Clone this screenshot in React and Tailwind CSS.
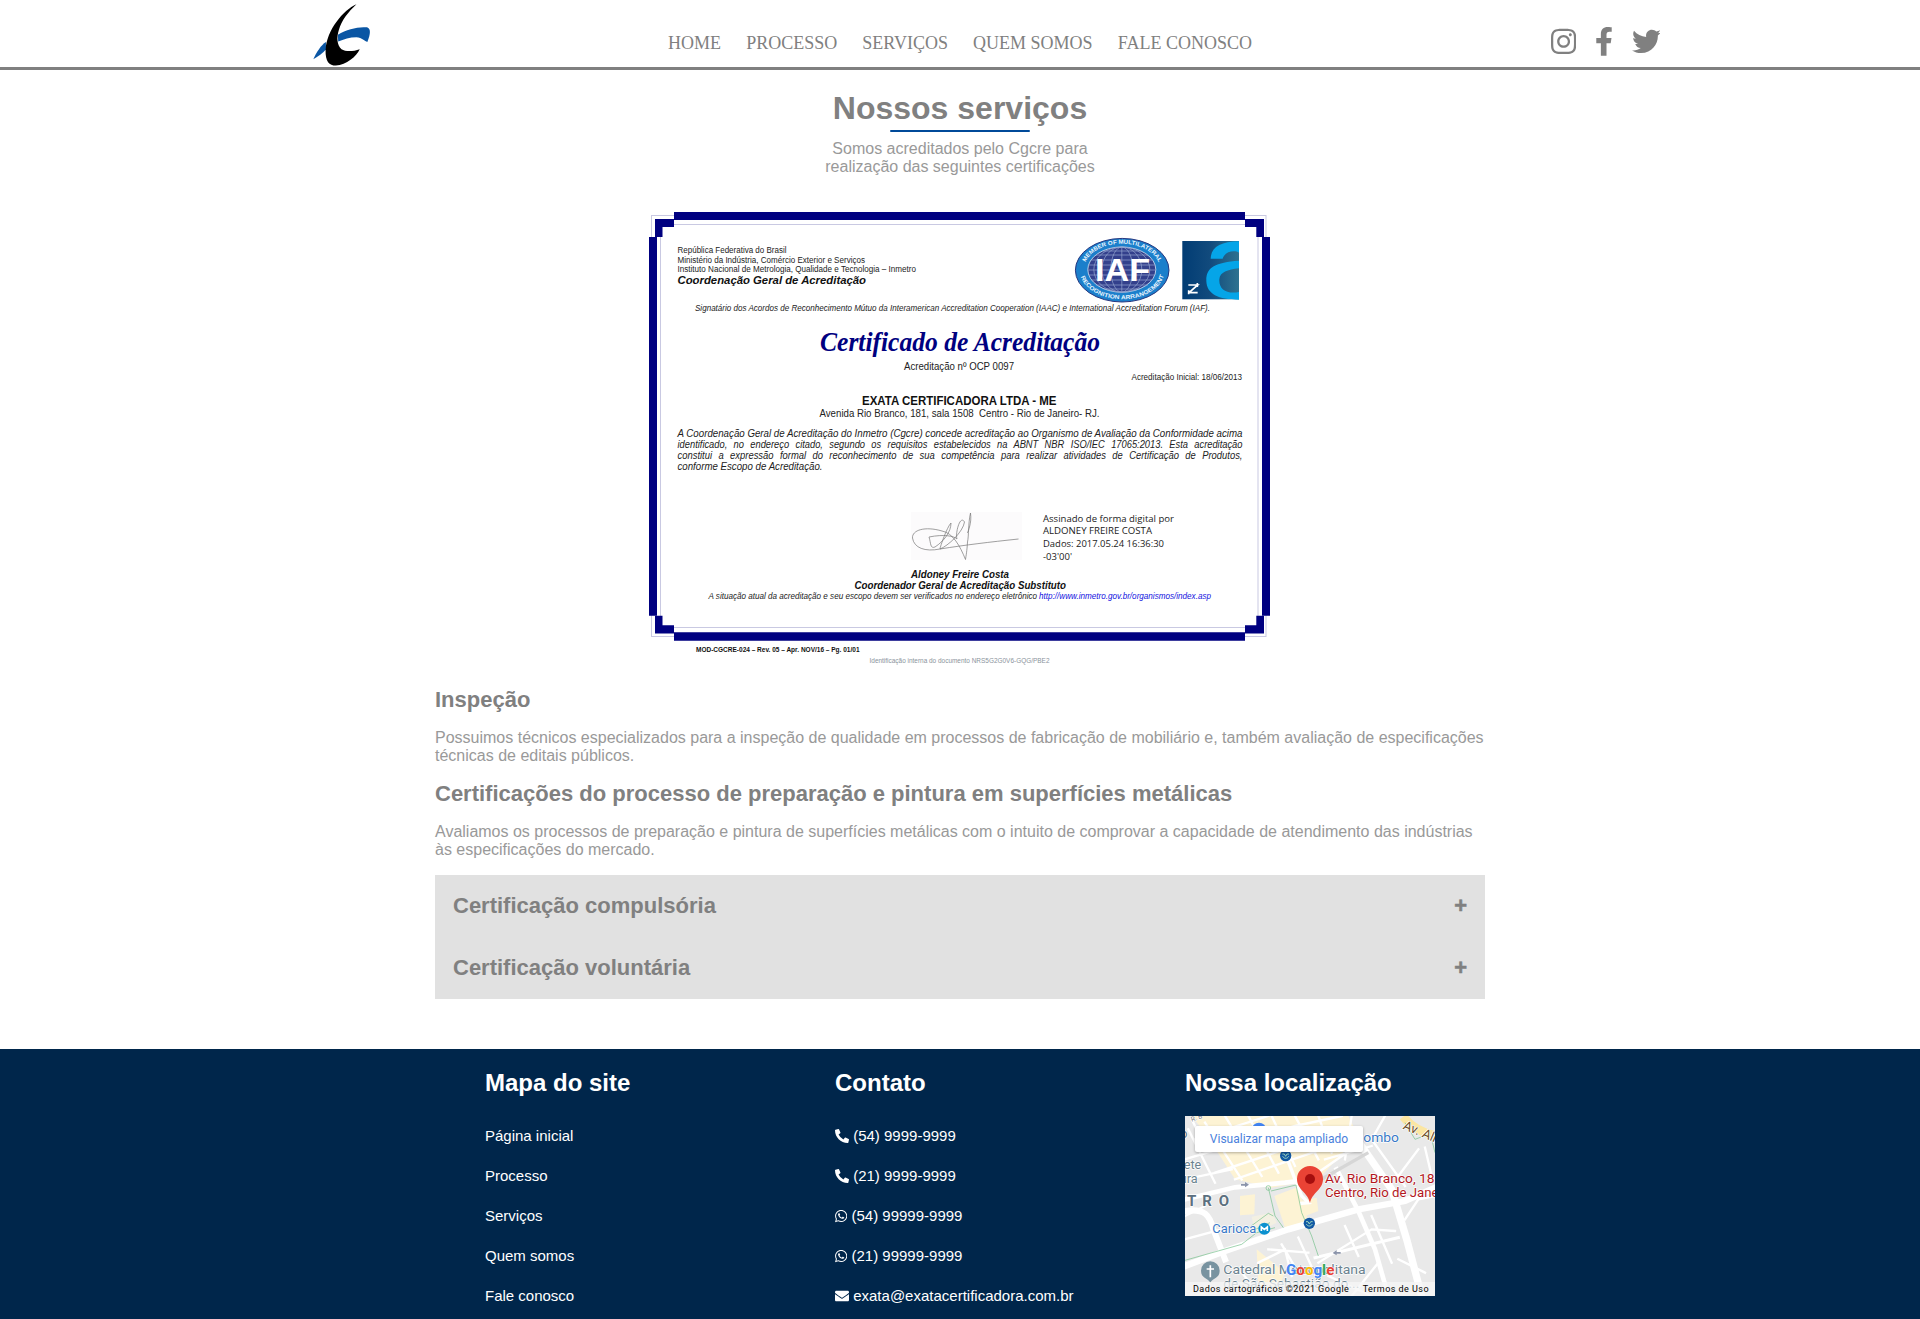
import React from "react";
import { FaInstagram, FaFacebookF, FaTwitter, FaPhoneAlt, FaWhatsapp, FaEnvelope } from "react-icons/fa";

const ARIAL = "'Liberation Sans', Arial, sans-serif";

function Logo() {
  return (
    <svg viewBox="60 0 190 201" className="h-[67px] w-[63px]" aria-hidden="true">
      <path d="M108 126C94 134 79 158 70 178C85 170 98 160 108 149Z" fill="#0a56a4" />
      <path d="M144 104C172 88 205 79 232 82C244 86 243 102 233 126C225 124 217 113 200 112C180 112 162 118 145 125Z" fill="#0a56a4" />
      <path d="M200 12C160 30 110 90 107 150C106 185 118 197 138 197C170 195 200 170 210 148C190 155 168 156 155 148C141 136 140 112 147 90C155 60 176 35 200 12Z" fill="#000" />
    </svg>
  );
}

function T({ x, y, w, s, b, i, fill = "#222", font = ARIAL, ws, children }) {
  return (
    <text
      x={x}
      y={y}
      textLength={w}
      lengthAdjust="spacingAndGlyphs"
      fontSize={s}
      fontWeight={b ? 700 : 400}
      fontStyle={i ? "italic" : "normal"}
      fontFamily={font}
      fill={fill}
      wordSpacing={ws}
    >
      {children}
    </text>
  );
}

function IafSeal() {
  return (
    <g>
      <ellipse cx="1122.2" cy="270.2" rx="46.8" ry="31.8" fill="#1b7fcb" stroke="#27377f" strokeWidth="1" />
      <ellipse cx="1121.8" cy="269.6" rx="34" ry="22.6" fill="#33408c" stroke="#d5e6f5" strokeWidth="0.8" />
      <g fill="none" stroke="#93a5d0" strokeWidth="0.7">
        <ellipse cx="1121.8" cy="269.6" rx="28" ry="22.6" />
        <ellipse cx="1121.8" cy="269.6" rx="20" ry="22.6" />
        <ellipse cx="1121.8" cy="269.6" rx="11" ry="22.6" />
        <path d="M1121.8 247V292M1103 251H1141M1096 255H1148M1091 260H1152M1089 265H1155M1088 270H1156M1089 275H1155M1091 280H1152M1096 285H1148M1104 289H1140" />
      </g>
      <path id="iaf-top" d="M1084.5 268A37.5 24.2 0 0 1 1159.5 268" fill="none" />
      <path id="iaf-bottom" d="M1079.700 270A42.5 29.3 0 0 0 1164.7 270" fill="none" />
      <text fontFamily={ARIAL} fontSize="5.8" fontWeight="700" fill="#eaf6ff">
        <textPath href="#iaf-top" startOffset="6" textLength="86" lengthAdjust="spacingAndGlyphs">MEMBER OF MULTILATERAL</textPath>
      </text>
      <text fontFamily={ARIAL} fontSize="5.8" fontWeight="700" fill="#eaf6ff">
        <textPath href="#iaf-bottom" startOffset="7" textLength="101" lengthAdjust="spacingAndGlyphs">RECOGNITION ARRANGEMENT</textPath>
      </text>
      <T x={1095} y={281} w={55} s={31} b fill="#fff">IAF</T>
    </g>
  );
}

function InmetroMark() {
  return (
    <g>
      <defs>
        <linearGradient id="inm" x1="0" x2="1">
          <stop offset="0" stopColor="#013c74" />
          <stop offset="0.5" stopColor="#124b7d" />
          <stop offset="1" stopColor="#2e7290" />
        </linearGradient>
      </defs>
      <rect x="1182.3" y="241" width="56.7" height="58.3" fill="url(#inm)" />
      <g transform="translate(1060 225) scale(.33333)">
        <path d="M452 101C453 66 482 50 537 49V83C525 75 496 77 488 101ZM537 107C465 112 438 127 439 168C440 207 475 224 537 224V201C500 208 476 193 478 163C480 141 503 134 537 130Z" fill="#05a5e8" />
        <path d="M385 203H413M385 180H413L388 202M386 196V208M412 174V186" fill="none" stroke="#fff" strokeWidth="5" />
      </g>
    </g>
  );
}

function Certificate() {
  return (
    <svg viewBox="640 200 640 470" className="block h-[470px] w-[640px]" role="img" aria-label="Certificado de Acreditação">
      <g fill="none" stroke="#c9c9e2" strokeWidth="1">
        <rect x="651.5" y="215.5" width="614.5" height="421" />
        <rect x="660.5" y="224.5" width="597.5" height="403" />
      </g>
      <g fill="#000080">
        <path d="M674 212H1245V220H674ZM674 632.3H1245V640.7H674ZM649 237H657V615.7H649ZM1262 237H1270V615.7H1262Z" />
        <path d="M655 219H674V227H662.5V237H655ZM1245 219H1264V237H1256.3V227H1245ZM655 615.7H662.5V625.3H674V633.5H655ZM1264 615.7V633.5H1245V625.3H1256.3V615.7Z" />
      </g>
      <T x={677.5} y={253.3} w={109} s={8.3}>República Federativa do Brasil</T>
      <T x={677.5} y={262.7} w={187.5} s={8.3}>Ministério da Indústria, Comércio Exterior e Serviços</T>
      <T x={677.5} y={272} w={238.5} s={8.3}>Instituto Nacional de Metrologia, Qualidade e Tecnologia – Inmetro</T>
      <T x={677.5} y={283.9} w={188.5} s={11.3} b i fill="#111">Coordenação Geral de Acreditação</T>
      <IafSeal />
      <InmetroMark />
      <T x={695} y={310.7} w={515} s={8.6} i>Signatário dos Acordos de Reconhecimento Mútuo da Interamerican Accreditation Cooperation (IAAC) e International Accreditation Forum (IAF).</T>
      <T x={820} y={351} w={280} s={28} b i fill="#000080" font="'Brush Script MT', 'Liberation Serif', serif">Certificado de Acreditação</T>
      <T x={904} y={370} w={110} s={10.3}>Acreditação nº OCP 0097</T>
      <T x={1131.5} y={379.8} w={110.5} s={8.5}>Acreditação Inicial: 18/06/2013</T>
      <T x={862} y={405} w={194.5} s={12.2} b fill="#111">EXATA CERTIFICADORA LTDA - ME</T>
      <T x={819.5} y={416.5} w={280} s={10.3}>Avenida Rio Branco, 181, sala 1508&nbsp; Centro - Rio de Janeiro- RJ.</T>
      <T x={677.5} y={437} w={565} s={10} i>A Coordenação Geral de Acreditação do Inmetro (Cgcre) concede acreditação ao Organismo de Avaliação da Conformidade acima</T>
      <T x={677.5} y={448} w={565} s={10} i ws={4}>identificado, no endereço citado, segundo os requisitos estabelecidos na ABNT NBR ISO/IEC 17065:2013. Esta acreditação</T>
      <T x={677.5} y={459} w={565} s={10} i ws={4}>constitui a expressão formal do reconhecimento de sua competência para realizar atividades de Certificação de Produtos,</T>
      <T x={677.5} y={470} w={145} s={10} i>conforme Escopo de Acreditação.</T>
      <rect x="911" y="512" width="111" height="48" fill="#fcfbfc" />
      <path
        d="M970.5 513C968 524 969 535 967.5 542C967 551 966 556 965.5 559.5C960 546 953 533 942 531C925 526 912 530 912.5 538C914 548 925 552 940 549C965 545 990 542 1018.5 539M929 537C931 543 930 549 935 547C944 541 951 532 951 523C947 527 940 547 940 549C948 546 963 532 964.5 522C960 514 955 534 957 539C954 536 944 534 929 537M970.5 513C972 523 968 531 967.5 533"
        fill="none"
        stroke="#777"
        strokeWidth="0.7"
      />
      <T x={1043} y={521.7} w={131} s={9.8} font="'Open Sans', sans-serif">Assinado de forma digital por</T>
      <T x={1043} y={534.3} w={109} s={9.8} font="'Open Sans', sans-serif">ALDONEY FREIRE COSTA</T>
      <T x={1043} y={547} w={121} s={9.8} font="'Open Sans', sans-serif">Dados: 2017.05.24 16:36:30</T>
      <T x={1043} y={559.8} w={29} s={9.8} font="'Open Sans', sans-serif">-03'00'</T>
      <T x={911} y={578} w={98} s={10} b i fill="#111">Aldoney Freire Costa</T>
      <T x={854.5} y={589} w={211.5} s={10} b i fill="#111">Coordenador Geral de Acreditação Substituto</T>
      <T x={708.5} y={598.8} w={328.5} s={8.4} i>A situação atual da acreditação e seu escopo devem ser verificados no endereço eletrônico</T>
      <T x={1039} y={598.8} w={172} s={8.4} i fill="#1010e0">http://www.inmetro.gov.br/organismos/index.asp</T>
      <T x={696} y={652} w={163.5} s={6.8} b fill="#111">MOD-CGCRE-024 – Rev. 05 – Apr. NOV/16 – Pg. 01/01</T>
      <T x={869.5} y={662.5} w={180} s={7} fill="#8a939c">Identificação interna do documento NRS5G2G0V6-GQG/PBE2</T>
    </svg>
  );
}

function StationBadge({ x, y }) {
  return (
    <g transform={`translate(${x} ${y})`}>
      <circle r="17" fill="#1259a3" />
      <path d="M-10 -5H-4L0 2L4 -5H10M-9 2C-5 10 5 10 9 2" fill="none" stroke="#9bd5c0" strokeWidth="3" />
    </g>
  );
}

function MapDrawing() {
  const roboto = "Roboto, sans-serif";
  return (
    <svg viewBox="0 0 750 540" className="block h-[180px] w-[250px]" aria-hidden="true">
      <rect width="750" height="540" fill="#e9e9e9" />
      <g fill="#fdf3d4">
        <path d="M20 0H490L520 60L400 190L260 215L150 190L60 50Z" />
        <path d="M268 240L340 212L372 325L300 335Z" />
        <path d="M165 240L210 235L208 295L165 298Z" />
        <path d="M345 255L395 245L400 285L360 300Z" />
        <path d="M215 400L300 470L280 520L220 510Z" />
        <path d="M200 302L262 290L275 320L210 352Z" fill="#f3f0e2" />
      </g>
      <path d="M655 2C680 35 710 50 750 58" fill="none" stroke="#fbe6a2" strokeWidth="26" />
      <g fill="none" stroke="#fff" strokeLinecap="square">
        <g strokeWidth="7">
          <path d="M0 130L330 30L470 0M60 20L170 190M120 0L230 180M190 0L280 170M260 0L330 150M330 0L400 130M30 70L250 0M90 170L420 60M150 190L440 90M10 40L90 200M400 0L440 110M500 0L480 130M0 190L140 160M420 130L560 90M370 190L500 100M20 10L60 90" />
          <path d="M290 385L340 470M340 365L420 540M250 400L370 410M220 440L300 400L320 480M400 440L560 340L630 345M480 330L520 420M560 300L620 440M0 370L110 340M0 300L60 270M170 470L230 540M430 480L560 540M580 440L500 540M640 430L720 470M600 0L560 70L660 210M700 100L640 180M720 95L740 180M660 310L700 250L750 240" />
        </g>
        <path d="M0 250L150 214L300 200L340 195" strokeWidth="14" />
        <path d="M300 110L330 190L350 240L370 260L350 262" strokeWidth="10" />
        <path d="M0 285C60 275 75 300 85 340L120 430" strokeWidth="18" />
        <path d="M0 450L120 405L310 340L520 280L660 255L750 215" strokeWidth="19" />
        <path d="M455 160L520 285L570 400L610 540" strokeWidth="14" />
        <path d="M530 90L620 220L665 370L710 540" strokeWidth="22" />
        <path d="M390 425L640 365" strokeWidth="9" />
      </g>
      <path d="M400 195L550 110" stroke="#d6d6d6" strokeWidth="10" />
      <g fill="none" stroke="#72c08a" strokeWidth="2">
        <path d="M0 433L170 385L215 350L270 335M250 215L270 300L295 335M258 225L333 207L350 290L380 360L400 420M185 340L250 292L265 300M200 345L255 320M660 20L690 70L730 55M738 60L750 110" />
        <circle cx="250" cy="216" r="7" />
      </g>
      <g fill="#8b94aa">
        <path d="M168 204H180V198L192 206L180 214V209H168ZM467 408H455V402L443 411L455 418V413H467Z" />
      </g>
      <circle cx="222" cy="42" r="22" fill="#4285f4" />
      <StationBadge x={302} y={119} />
      <StationBadge x={373} y={322} />
      <g fontFamily={roboto} stroke="#fff" strokeWidth="4" paintOrder="stroke" strokeLinejoin="round">
        <text x="20" y="17" fontSize="20" fill="#777" transform="rotate(-18 20 17)">R. B</text>
        <text x="-14" y="66" fontSize="38" fill="#5c7080">o</text>
        <text x="-4" y="158" fontSize="38" fill="#6b8390">ete</text>
        <text x="-16" y="200" fontSize="38" fill="#6b8390">ura</text>
        <g fontSize="45" fontWeight="700" fill="#5c7080">
          <text x="6" y="271">T</text>
          <text x="52" y="271">R</text>
          <text x="101" y="271">O</text>
        </g>
        <g lengthAdjust="spacingAndGlyphs">
          <text x="82" y="350" fontSize="39" fill="#3878c7" textLength="132" lengthAdjust="spacingAndGlyphs">Carioca</text>
          <text x="535" y="77" fontSize="39" fill="#3878c7" textLength="107" lengthAdjust="spacingAndGlyphs">ombo</text>
          <text x="652" y="38" fontSize="39" fill="#6d4c1d" transform="rotate(23 652 38)">Av. Alm</text>
          <text x="115" y="474" fontSize="39" fill="#6b8390" textLength="427" lengthAdjust="spacingAndGlyphs">Catedral Metropolitana</text>
          <text x="115" y="515" fontSize="39" fill="#6b8390" textLength="408" lengthAdjust="spacingAndGlyphs">de São Sebastião do...</text>
          <text x="420" y="201" fontSize="40" fill="#b3171d" textLength="352" lengthAdjust="spacingAndGlyphs">Av. Rio Branco, 181</text>
          <text x="420" y="243" fontSize="40" fill="#b3171d" textLength="386" lengthAdjust="spacingAndGlyphs">Centro, Rio de Janeiro</text>
        </g>
      </g>
      <circle cx="238" cy="338" r="18" fill="#0b91cf" />
      <path d="M229 345V333L238 340L247 333V345" fill="none" stroke="#fff" strokeWidth="5" />
      <path d="M76 500C68 485 48 487 48 464A28 28 0 0 1 104 464C104 487 84 485 76 500Z" fill="#7893a0" />
      <path d="M76 448V484M65 459H87" stroke="#fff" strokeWidth="5" />
      <path d="M375 262C370 230 336 222 336 189A39 39 0 0 1 414 189C414 222 380 230 375 262Z" fill="#ea4335" />
      <circle cx="375" cy="189" r="15" fill="#a50e0e" />
      <text x="303" y="476" fontSize="45" fontWeight="700" fontFamily={roboto} textLength="145" lengthAdjust="spacingAndGlyphs" stroke="#fff" strokeWidth="3" paintOrder="stroke">
        <tspan fill="#4285f4">G</tspan>
        <tspan fill="#ea4335">o</tspan>
        <tspan fill="#fbbc04">o</tspan>
        <tspan fill="#4285f4">g</tspan>
        <tspan fill="#34a853">l</tspan>
        <tspan fill="#ea4335">e</tspan>
      </text>
    </svg>
  );
}

function MapCard() {
  return (
    <div className="relative h-[180px] w-[250px] overflow-hidden font-[Roboto,sans-serif]">
      <MapDrawing />
      <a className="absolute left-[10px] top-[10px] flex h-[26px] w-[168px] items-center justify-center whitespace-nowrap rounded-[2px] bg-white text-[12px] text-[#4a7fdc] shadow-[0_1px_3px_rgba(0,0,0,0.3)]">
        Visualizar mapa ampliado
      </a>
      <div className="absolute bottom-0 right-0 flex h-[14px] w-full items-center justify-between whitespace-nowrap bg-[#f5f5f5]/75 pl-2 pr-1.5 text-[9px] leading-[14px] tracking-[0.46px] text-black">
        <span>Dados cartográficos ©2021 Google</span>
        <span>Termos de Uso</span>
      </div>
    </div>
  );
}

const NAV = ["Home", "Processo", "Serviços", "Quem somos", "Fale conosco"];
const SITE = ["Página inicial", "Processo", "Serviços", "Quem somos", "Fale conosco"];
const CONTACT = [
  [FaPhoneAlt, "(54) 9999-9999", "w-[14px]"],
  [FaPhoneAlt, "(21) 9999-9999", "w-[14px]"],
  [FaWhatsapp, "(54) 99999-9999", "w-[12.3px]"],
  [FaWhatsapp, "(21) 99999-9999", "w-[12.3px]"],
  [FaEnvelope, "exata@exatacertificadora.com.br", "w-[14px]"],
];

function Service({ title, children }) {
  return (
    <article>
      <h2 className="text-[22px] font-bold leading-[26px] text-[#808080]">{title}</h2>
      <p className="mt-4 text-[16px] leading-[18px] text-[#999]">{children}</p>
    </article>
  );
}

export default function App() {
  return (
    <div className="h-[1319px] w-[1920px] overflow-hidden bg-white font-['Liberation_Sans',Arial,sans-serif]">
      <header className="flex h-[70px] items-start border-b-[3px] border-[#808080] pl-[310px] text-[#808080]">
        <Logo />
        <nav className="ml-[295px] mt-[33px] flex w-[584px] justify-between whitespace-nowrap font-['Liberation_Serif',serif] text-[18px] uppercase leading-[21px]">
          {NAV.map((n) => (
            <a key={n}>{n}</a>
          ))}
        </nav>
        <div className="ml-[299px] mt-[27px] flex gap-[18.7px]">
          <FaInstagram className="h-[28.8px] w-[25.2px]" />
          <FaFacebookF className="h-[28.8px] w-[18px]" />
          <FaTwitter className="h-[28.8px] w-[28.8px]" />
        </div>
      </header>

      <main className="flex h-[979px] flex-col items-center">
        <h1 className="mt-5 text-[32px] font-bold leading-9 text-[#808080]">Nossos serviços</h1>
        <div className="mt-1 h-[2px] w-[140px] rounded-full bg-[#004a99]" />
        <p className="mt-2 text-center text-[16px] leading-[18px] text-[#999]">
          Somos acreditados pelo Cgcre para
          <br />
          realização das seguintes certificações
        </p>
        <div className="mt-6 h-[470px]">
          <Certificate />
        </div>
        <section className="mt-[17px] flex w-[1050px] flex-col gap-4">
          <Service title="Inspeção">
            Possuimos técnicos especializados para a inspeção de qualidade em processos de fabricação de mobiliário e, também avaliação de especificações técnicas de editais públicos.
          </Service>
          <Service title="Certificações do processo de preparação e pintura em superfícies metálicas">
            Avaliamos os processos de preparação e pintura de superfícies metálicas com o intuito de comprovar a capacidade de atendimento das indústrias às especificações do mercado.
          </Service>
        </section>
        <div className="mt-4 w-[1050px] bg-[#e1e1e1] text-[22px] font-bold leading-[26px] text-[#808080]">
          {["Certificação compulsória", "Certificação voluntária"].map((t) => (
            <button key={t} className="flex h-[62px] w-full items-center justify-between px-[18px]">
              <span>{t}</span>
              <span className="[-webkit-text-stroke:0.5px_#808080]">+</span>
            </button>
          ))}
        </div>
      </main>

      <footer className="grid h-[270px] grid-cols-[350px_350px_250px] bg-[#00264b] pl-[485px] pt-5 text-[15px] text-white">
        <div>
          <h3 className="text-[24px] font-bold leading-7">Mapa do site</h3>
          <ul className="mt-[19px]">
            {SITE.map((s) => (
              <li key={s} className="h-10 leading-10">{s}</li>
            ))}
          </ul>
        </div>
        <div>
          <h3 className="text-[24px] font-bold leading-7">Contato</h3>
          <ul className="mt-[19px]">
            {CONTACT.map(([Icon, label, width]) => (
              <li key={label} className="flex h-10 items-center gap-[4.2px] leading-10">
                <Icon className={`h-[14px] ${width}`} />
                <span>{label}</span>
              </li>
            ))}
          </ul>
        </div>
        <div>
          <h3 className="mb-[19px] text-[24px] font-bold leading-7">Nossa localização</h3>
          <MapCard />
        </div>
      </footer>
    </div>
  );
}
